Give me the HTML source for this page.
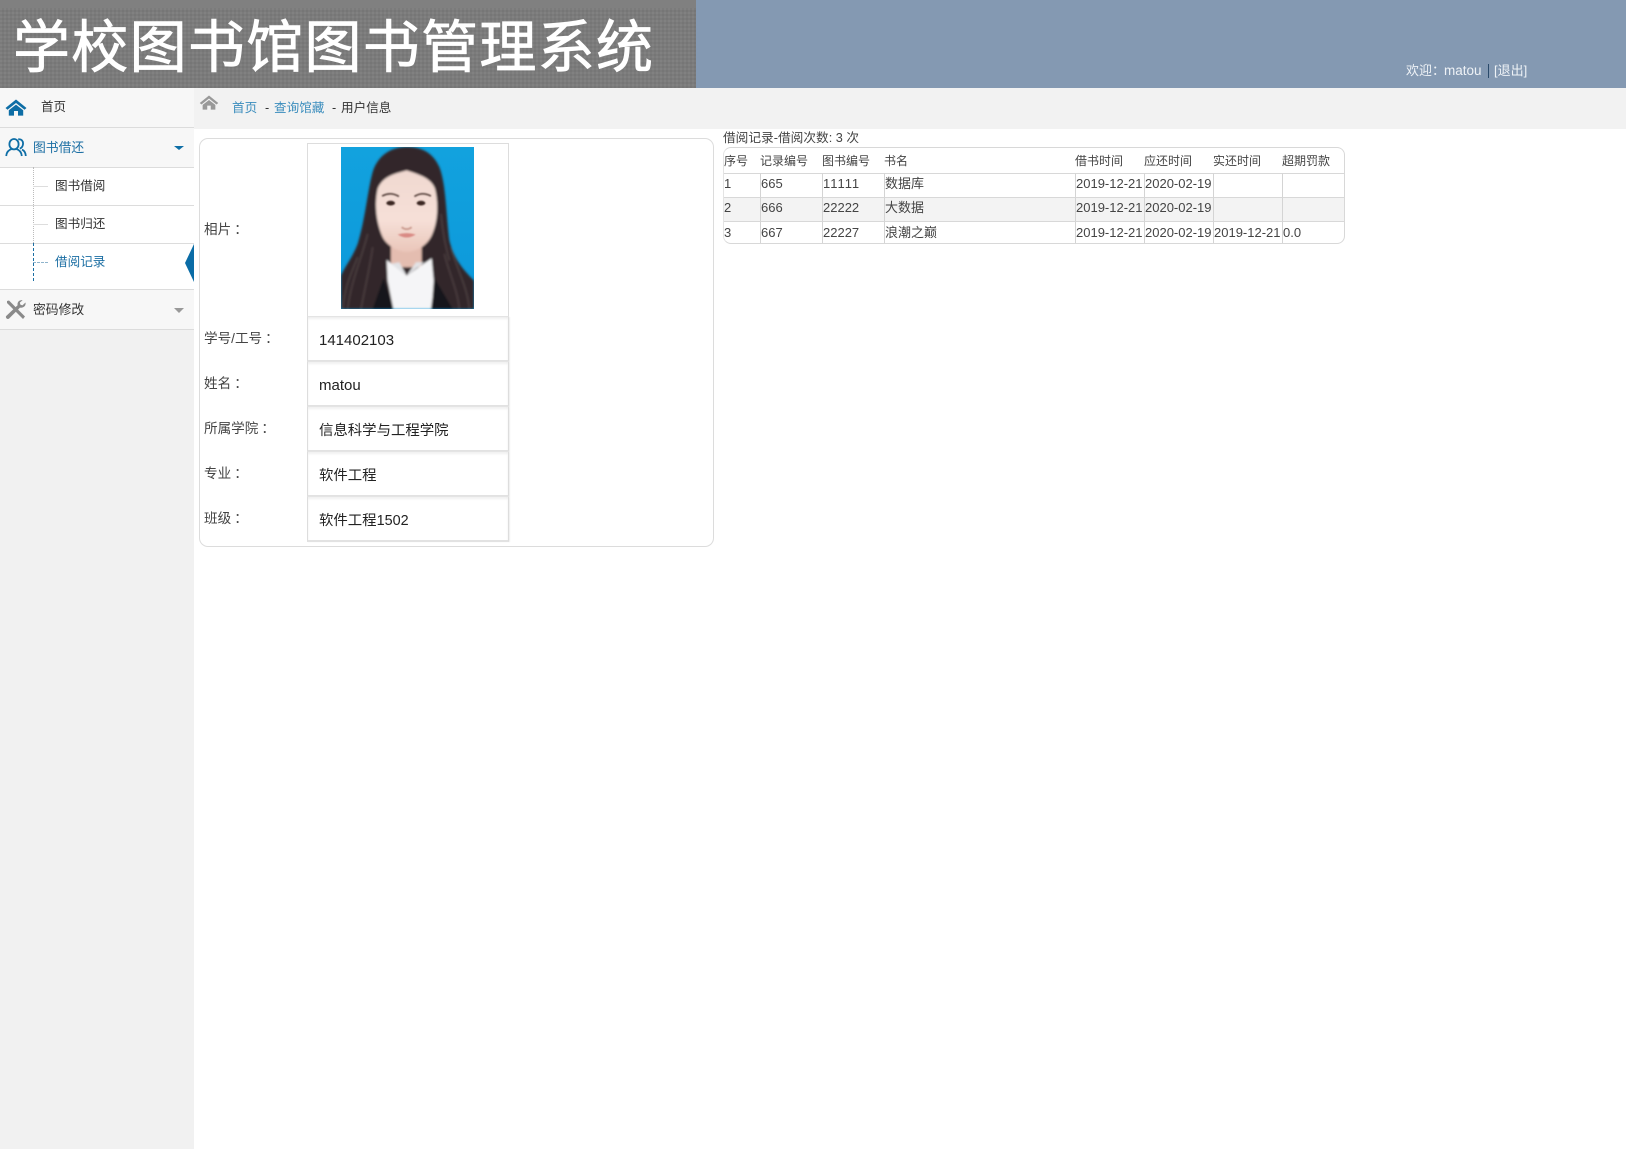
<!DOCTYPE html>
<html lang="zh"><head><meta charset="utf-8"><title>学校图书馆图书管理系统</title>
<style>
html,body{margin:0;padding:0;width:1626px;height:1149px;overflow:hidden;background:#fff}
body{position:relative;font-family:"Liberation Sans","Noto Sans CJK SC",sans-serif;color:#333;font-size:13px;font-kerning:none}
.a{position:absolute;white-space:nowrap}
.t{position:absolute;white-space:nowrap;line-height:20px;height:20px}
.blue{color:#1b6ea3}
.link{color:#3b8dbd}
.line{position:absolute;background:#dcdcdc;height:1px}
.lab{position:absolute;left:204px;font-size:13.6px;line-height:20px;color:#444;white-space:nowrap}
.lab i{font-style:normal;padding-left:3px}
.val{position:absolute;left:307px;height:43px;border-left:1px solid #ddd;border-right:1px solid #ddd;border-bottom:2px solid #e2e2e2;box-shadow:inset 0 2px 2px #f0f0f0,1px 0 1px #eee;font-size:14.4px;line-height:47px;padding-left:11px;width:189px;color:#222;white-space:nowrap}
table{position:absolute;left:723px;top:147px;width:622px;height:97px;border-collapse:separate;border-spacing:0;table-layout:fixed;font-size:13px;color:#444;border:1px solid #d8d8d8;border-left:1px solid #e4e4e4;border-radius:8px;box-sizing:border-box}
td,th{padding:0;font-weight:normal;text-align:left;white-space:nowrap;overflow:visible;border-left:1px solid #d4d4d4;border-top:1px solid #d8d8d8;box-sizing:border-box;line-height:20px}
td:first-child,th:first-child{border-left:0}
th{border:0;font-size:12px;height:25px}
tr.r td{height:24px;vertical-align:top}
tr.l td{height:22px;padding-top:1px}
tr.g td{background:#f3f3f3}
</style></head><body>

<!-- header -->
<div class="a" style="left:0;top:0;width:1626px;height:88px;background:#8499b2"></div>
<div class="a" style="left:0;top:0;width:696px;height:88px;background-color:#7b7b7b;background-image:radial-gradient(circle at 1px 1px,#838383 0.8px,transparent 1px),radial-gradient(circle at 3px 3px,#747474 0.8px,transparent 1px);background-size:4px 4px;overflow:hidden">
  <div class="a" style="left:0;top:0;width:696px;height:8px;background:#808080"></div>
  <div class="a" style="left:13px;top:3px;font-size:57px;line-height:80px;letter-spacing:1.3px;color:#fff;-webkit-text-stroke:.8px #fff;font-weight:400;font-family:'Noto Sans CJK SC',sans-serif">学校图书馆图书管理系统</div>
</div>
<div class="t" style="left:1406px;top:61px;color:#eef2f6;font-size:13px">欢迎：</div>
<div class="t" style="left:1444px;top:61px;color:#eef2f6;font-size:13.5px">matou</div>
<div class="a" style="left:1488px;top:64px;width:1px;height:14px;background:#2a4a6a"></div>
<div class="t" style="left:1494px;top:61px;color:#eef2f6;font-size:13px">[退出]</div>

<!-- sidebar -->
<div class="a" style="left:0;top:88px;width:194px;height:1061px;background:#f1f1f1"></div>
<div class="a" style="left:0;top:88px;width:194px;height:241px;background:#f7f7f7"></div>
<div class="a" style="left:0;top:167px;width:194px;height:122px;background:#fff"></div>
<div class="line" style="left:0;top:127px;width:194px"></div>
<div class="line" style="left:0;top:167px;width:194px"></div>
<div class="line" style="left:0;top:205px;width:194px"></div>
<div class="line" style="left:0;top:243px;width:194px"></div>
<div class="line" style="left:0;top:289px;width:194px"></div>
<div class="line" style="left:0;top:329px;width:194px"></div>

<svg class="a" style="left:5px;top:99px" width="22" height="17" viewBox="0 0 22 17"><path d="M11 0.5 L21.5 9 L19.5 10.8 L11 4 L2.5 10.8 L0.5 9 Z" fill="#0e6ea6"/><path d="M11 5.6 L18.2 11.2 L18.2 16.6 L13 16.6 L13 12 L9 12 L9 16.6 L3.8 16.6 L3.8 11.2 Z" fill="#0e6ea6"/></svg>
<div class="t" style="left:41px;top:97px;font-size:12.5px">首页</div>

<svg class="a" style="left:5px;top:138px" width="22" height="19" viewBox="0 0 22 19" fill="none" stroke="#0e6ea6" stroke-width="1.8"><ellipse cx="9" cy="6.2" rx="4.6" ry="5.2"/><path d="M1.2 18 C1.6 13.6 4 11.8 6.6 11"/><path d="M11.4 11 C14 11.8 16.4 13.6 16.8 18"/><path d="M13.2 1.4 C16.4 0.6 18.4 3.2 18 6.2 C17.7 8.6 16.4 10 14.8 10.6"/><path d="M17 11.6 C19.2 12.6 20.6 14.8 20.8 18"/></svg>
<div class="t blue" style="left:33px;top:138px;font-size:12.8px">图书借还</div>
<div class="a" style="left:174px;top:146px;width:0;height:0;border-left:5px solid transparent;border-right:5px solid transparent;border-top:4px solid #0e6ea6"></div>

<div class="a" style="left:33px;top:167px;width:0;height:76px;border-left:1px dotted #bbb"></div>
<div class="a" style="left:33px;top:243px;width:0;height:38px;border-left:1px dashed #1b6ea3"></div>
<div class="a" style="left:33px;top:186px;width:15px;height:1px;background:#ddd"></div>
<div class="a" style="left:33px;top:224px;width:15px;height:1px;background:#ddd"></div>
<div class="a" style="left:33px;top:262px;width:15px;height:0;border-top:1px dashed #8fb4cc"></div>
<div class="t" style="left:55px;top:176px;font-size:12.6px">图书借阅</div>
<div class="t" style="left:55px;top:214px;font-size:12.6px">图书归还</div>
<div class="t blue" style="left:55px;top:252px;font-size:12.6px">借阅记录</div>
<svg class="a" style="left:185px;top:244px" width="9" height="38" viewBox="0 0 9 38"><path d="M9 0 L0 19 L9 38 Z" fill="#0a6ca6"/></svg>

<svg class="a" style="left:5px;top:300px" width="22" height="20" viewBox="0 0 22 20"><path d="M2 1 L4 0.5 L20 16.5 L18 19 L2 3 Z" fill="#8a8a8a"/><path d="M20.5 2.5 L17.4 5.4 L15.4 4.6 L14.8 2.6 L17.6 0.2 C14.6 -0.4 12 2 12.6 5.2 L1.2 16 C0 17.4 2.4 20 4 18.6 L15 7.6 C18.2 8.2 21.2 6 20.5 2.5 Z" fill="#8a8a8a"/></svg>
<div class="t" style="left:33px;top:300px;font-size:12.8px">密码修改</div>
<div class="a" style="left:174px;top:308px;width:0;height:0;border-left:5px solid transparent;border-right:5px solid transparent;border-top:5px solid #999"></div>

<!-- breadcrumb -->
<div class="a" style="left:194px;top:88px;width:1432px;height:41px;background:#f2f2f2"></div>
<svg class="a" style="left:199px;top:95px" width="20" height="15" viewBox="0 0 22 17"><path d="M11 0.5 L21.5 9 L19.5 10.8 L11 4 L2.5 10.8 L0.5 9 Z" fill="#999"/><path d="M11 5.6 L18.2 11.2 L18.2 16.6 L13 16.6 L13 12 L9 12 L9 16.6 L3.8 16.6 L3.8 11.2 Z" fill="#999"/></svg>
<div class="t link" style="left:232px;top:98px;font-size:12.6px">首页</div>
<div class="t" style="left:265px;top:98px;font-size:12.6px">-</div>
<div class="t link" style="left:274px;top:98px;font-size:12.6px">查询馆藏</div>
<div class="t" style="left:332px;top:98px;font-size:12.6px">-</div>
<div class="t" style="left:341px;top:98px;font-size:12.6px">用户信息</div>

<!-- card -->
<div class="a" style="left:199px;top:138px;width:513px;height:407px;border:1px solid #dcdcdc;border-radius:9px;box-sizing:content-box"></div>
<div class="a" style="left:307px;top:143px;width:200px;height:172px;border:1px solid #ddd;border-bottom:2px solid #e2e2e2"></div>

<svg class="a" style="left:341px;top:147px" width="133" height="162" viewBox="0 0 399 485" preserveAspectRatio="none">
<defs><filter id="b" x="-5%" y="-5%" width="110%" height="110%"><feGaussianBlur stdDeviation="3"/></filter>
<filter id="s" x="-20%" y="-20%" width="140%" height="140%"><feGaussianBlur stdDeviation="2"/></filter>
<linearGradient id="bg" x1="0" y1="0" x2="0" y2="1"><stop offset="0" stop-color="#12a2de"/><stop offset="1" stop-color="#0c98da"/></linearGradient>
<linearGradient id="fc" x1="0" y1="0" x2="0" y2="1"><stop offset="0" stop-color="#f0d8d0"/><stop offset=".6" stop-color="#f6e0d8"/><stop offset="1" stop-color="#eac6ba"/></linearGradient></defs>
<rect width="399" height="485" fill="url(#bg)"/>
<g filter="url(#b)">
<path d="M197 0 C150 0 110 25 95 75 C80 130 72 220 50 290 C35 330 10 360 0 385 L0 485 L399 485 L399 400 C370 370 340 340 325 280 C315 200 315 110 295 60 C275 15 240 0 197 0 Z" fill="#302829"/>
<g stroke="#6a5658" stroke-width="3.5" fill="none" opacity=".6"><path d="M80 260 C60 340 30 400 20 485"/><path d="M95 300 C85 370 70 430 60 485"/><path d="M50 330 C30 380 10 420 6 485"/><path d="M330 300 C345 360 380 420 385 485"/><path d="M310 320 C325 380 350 430 355 485"/><path d="M300 200 C305 260 315 300 325 340"/></g>
<rect x="150" y="290" width="92" height="70" fill="#e4bdb0"/>
<path d="M197 70 C170 78 125 85 110 125 C100 170 105 225 125 270 C140 298 172 314 197 314 C224 314 256 298 272 265 C292 222 292 165 282 125 C270 90 225 80 197 70 Z" fill="url(#fc)"/>
<path d="M137 338 L197 385 L272 333 L278 400 L272 485 L157 485 L140 400 Z" fill="#f5f5f7"/>
<path d="M197 385 L150 350 L175 345 Z M197 385 L250 345 L225 345 Z" fill="#e2e3e6"/>
<path d="M128 392 L157 485 L95 485 Z" fill="#17161a"/>
<path d="M282 395 L270 485 L335 485 Z" fill="#17161a"/>
</g>
<g filter="url(#s)">
<g fill="none" stroke="#5a4540" stroke-linecap="round">
<path d="M125 146 Q148 134 172 147" stroke-width="5"/><path d="M222 147 Q244 134 268 146" stroke-width="5"/>
</g>
<ellipse cx="149" cy="168" rx="13" ry="7" fill="#3a2622"/><ellipse cx="240" cy="168" rx="13" ry="7" fill="#3a2622"/>
<path d="M182 240 Q197 252 212 240" fill="none" stroke="#c9998c" stroke-width="5"/>
<path d="M170 262 Q197 254 224 262 Q197 280 170 262 Z" fill="#d98a84"/>
</g>
</svg>

<div class="lab" style="top:220px">相片<i>：</i></div>
<div class="lab" style="top:329px">学号/工号<i>：</i></div>
<div class="lab" style="top:374px">姓名<i>：</i></div>
<div class="lab" style="top:419px">所属学院<i>：</i></div>
<div class="lab" style="top:464px">专业<i>：</i></div>
<div class="lab" style="top:509px">班级<i>：</i></div>

<div class="val" style="top:317px;font-size:15px">141402103</div>
<div class="val" style="top:362px;font-size:15px">matou</div>
<div class="val" style="top:407px;line-height:49px">信息科学与工程学院</div>
<div class="val" style="top:452px;line-height:49px">软件工程</div>
<div class="val" style="top:497px;line-height:49px">软件工程1502</div>

<!-- table -->
<div class="t" style="left:723px;top:128px;font-size:12.7px;color:#444">借阅记录-借阅次数: 3 次</div>
<table>
<colgroup><col style="width:36px"><col style="width:62px"><col style="width:62px"><col style="width:191px"><col style="width:69px"><col style="width:69px"><col style="width:69px"><col></colgroup>
<tr><th>序号</th><th>记录编号</th><th>图书编号</th><th>书名</th><th>借书时间</th><th>应还时间</th><th>实还时间</th><th>超期罚款</th></tr>
<tr class="r"><td>1</td><td>665</td><td>11111</td><td>数据库</td><td>2019-12-21</td><td>2020-02-19</td><td></td><td></td></tr>
<tr class="r g"><td>2</td><td>666</td><td>22222</td><td>大数据</td><td>2019-12-21</td><td>2020-02-19</td><td></td><td></td></tr>
<tr class="r l"><td>3</td><td>667</td><td>22227</td><td>浪潮之巅</td><td>2019-12-21</td><td>2020-02-19</td><td>2019-12-21</td><td>0.0</td></tr>
</table>
</body></html>
